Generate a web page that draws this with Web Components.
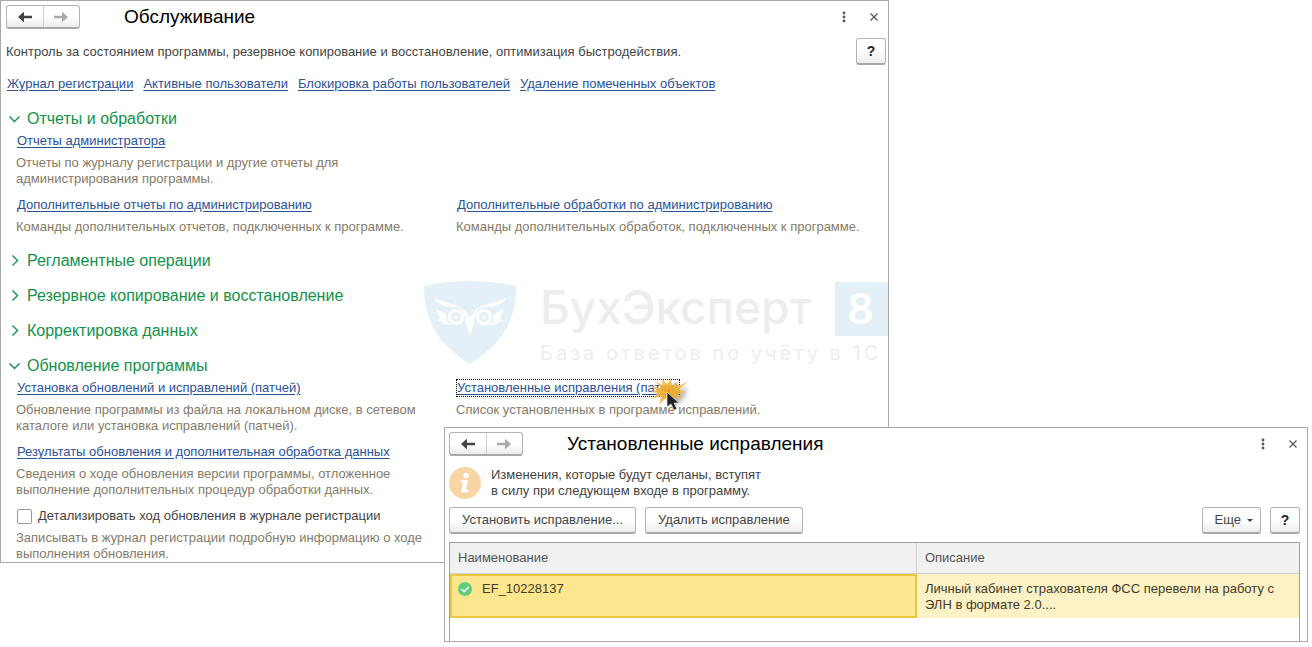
<!DOCTYPE html>
<html lang="ru">
<head>
<meta charset="utf-8">
<title>Обслуживание</title>
<style>
body { margin: 0; background: #fff; font: 13px/16px "Liberation Sans", Arial, sans-serif; color: #444; }
</style>
</head>
<body>
<app-desktop></app-desktop>
<script>
const define = (name, html, setup) => {
  const tpl = document.createElement('template');
  tpl.innerHTML = '<style>*{box-sizing:border-box}</style>' + html;
  customElements.define(name, class extends HTMLElement {
    constructor() {
      super();
      this.attachShadow({ mode: 'open' }).append(tpl.content.cloneNode(true));
    }
    connectedCallback() { if (setup) setup(this, this.shadowRoot); }
  });
};

define('ui-button', `
<style>
:host { display: block; }
button { display: flex; align-items: center; justify-content: center; gap: 6px; height: 27px; padding: 0 12px; width: 100%;
  border: 1px solid #b4b4b4; border-bottom: 2px solid #a8a8a8; border-radius: 3px;
  background: linear-gradient(#fff 50%, #ececec); font: inherit; color: #444; white-space: nowrap; }
:host([help]) { width: 30px; }
:host([help]) button { padding: 0; font-size: 14px; font-weight: bold; color: #222; }
:host([menu]) button { padding: 0 7px 0 12px; }
i { display: none; border: 3px solid transparent; border-top-color: #444; border-bottom: 0; }
:host([menu]) i { display: block; }
</style>
<button type="button"><slot></slot><i></i></button>`);

define('nav-buttons', `
<style>
:host { display: flex; width: 74px; height: 24px; border: 1px solid #b4b4b4; border-bottom: 2px solid #a8a8a8; border-radius: 3px;
  background: linear-gradient(#fff 50%, #ececec); box-sizing: border-box; }
button { flex: 1; display: grid; place-items: center; padding: 0; border: 0; background: none; color: #444; }
button + button { border-left: 1px solid #d0d0d0; color: #aaa; }
</style>
<button type="button" aria-label="Назад"><svg width="14" height="10" viewBox="0 0 14 10"><path d="M6 0v3.800h8v2.400H6V10L5 9.500 0 5 5 .5z" fill="currentColor"/></svg></button>
<button type="button" aria-label="Вперед"><svg width="14" height="10" viewBox="0 0 14 10"><path d="M8 0v3.800H0v2.400h8V10l1-.5L14 5 9 .5z" fill="currentColor"/></svg></button>`);

define('app-window', `
<style>
:host { display: flex; flex-direction: column; position: relative; overflow: hidden; background: #fff; border: 1px solid #a9a9a9; box-sizing: border-box; }
header { display: flex; align-items: center; height: 32px; padding: 0 5px 0 4px; }
:host([main]) header { padding-left: 5px; }
h1 { flex: 1; margin: 0 0 0 44px; font: 19px/24px "Liberation Sans", Arial, sans-serif; color: #000; }
header > button { width: 18px; height: 20px; display: grid; place-items: center; padding: 0; border: 0; background: none; color: #555; }
header > button + button { margin-left: 12px; }
</style>
<slot name="backdrop"></slot>
<header>
  <nav-buttons></nav-buttons><h1></h1>
  <button type="button" aria-label="Меню"><svg width="4" height="12" viewBox="0 0 4 12" fill="currentColor"><circle cx="2" cy="2" r="1.400"/><circle cx="2" cy="6" r="1.400"/><circle cx="2" cy="10" r="1.400"/></svg></button>
  <button type="button" aria-label="Закрыть"><svg width="8" height="8" viewBox="0 0 8 8"><path d="M.5.5l7 7M7.500.5l-7 7" stroke="currentColor" stroke-width="1.200"/></svg></button>
</header>
<slot></slot>`, (el, root) => { root.querySelector('h1').textContent = el.getAttribute('caption'); });

define('ui-link', `
<style>
:host { display: inline-block; }
a { color: #2a5298; text-decoration: underline; text-underline-offset: 2px; }
:host([focused]) a { display: block; outline: 1px dotted #000; }
</style>
<a href="#"><slot></slot></a>`);

define('ui-command', `
<style>
:host { display: block; }
ui-link { margin-left: 1px; vertical-align: top; }
p { margin: 6px 0 0; color: #847b68; }
</style>
<ui-link><slot></slot></ui-link><p><slot name="note"></slot></p>`,
(el, root) => { if (el.hasAttribute('focused')) root.querySelector('ui-link').setAttribute('focused', ''); });

define('ui-group', `
<style>
:host { display: block; }
button { display: flex; align-items: center; gap: 6px; padding: 0; border: 0; background: none; color: #12924a;
  font: 16px/19px "Liberation Sans", Arial, sans-serif; }
svg { display: block; }
:host([open]) svg { transform: rotate(90deg); }
div { padding: 5px 0 0 8px; }
:host(:not([open])) div { display: none; }
</style>
<button type="button"><svg width="13" height="13" viewBox="0 0 13 13"><path d="M4.500 1.500l5 5-5 5" fill="none" stroke="currentColor" stroke-width="1.400"/></svg><span></span></button>
<div><slot></slot></div>`, (el, root) => {
  root.querySelector('span').textContent = el.getAttribute('caption');
  root.querySelector('button').setAttribute('aria-expanded', el.hasAttribute('open'));
});

define('ui-check', `
<style>
:host { display: block; }
label { display: flex; align-items: center; gap: 6px; }
input { appearance: none; width: 15px; height: 15px; margin: 0 0 0 1px; border: 1px solid #999; border-radius: 2px; background: #fff; }
p { margin: 6px 0 0; color: #847b68; }
</style>
<label><input type="checkbox"><span><slot></slot></span></label><p><slot name="note"></slot></p>`);

define('brand-watermark', `
<style>
:host { position: absolute; left: 423px; top: 280px; display: flex; align-items: flex-start; white-space: nowrap; color: #ededef; }
svg { flex: none; }
.words { margin-left: 24px; }
.name { font: 500 46px/52px Inter, sans-serif; }
.tag { font: 20px/24px Inter, sans-serif; letter-spacing: 3px; margin-top: 8px; }
.eight { position: absolute; left: 411px; top: 1px; width: 60px; height: 54px; padding-left: 12px; background: #e4f0f8; color: #fff; font: 600 42px/54px Inter, sans-serif; }
</style>
<svg width="92" height="84" viewBox="0 0 92 84"><path d="M0 5Q46-5 92 5C92 43 76 64 46 83C16 64 0 43 0 5Z" fill="#e4f0f8"/>
<g fill="none" stroke="#fff"><circle cx="32" cy="36" r="6.500" stroke-width="3"/><circle cx="60" cy="36" r="6.500" stroke-width="3"/></g>
<g fill="#fff"><circle cx="32" cy="36" r="2"/><circle cx="60" cy="36" r="2"/><path d="M10 16C20 24 37 21 43 33L46 36L49 33C55 21 72 24 82 16C79 25 68 26 60 26C53 27 51 32 50 42L46 54L42 42C41 32 39 27 32 26C24 26 13 25 10 16Z"/><path d="M12 28l10 5 1 8 5 3-10-1 1-2-6-1 3-3zM80 28l-10 5-1 8-5 3 10-1-1-2 6-1-3-3z"/></g></svg>
<div class="words"><div class="name">БухЭксперт</div><div class="tag">База ответов по учёту в 1С</div></div>
<div class="eight">8</div>`);

define('click-pointer', `
<style>:host { position: absolute; right: -10px; top: -5px; pointer-events: none; } svg { display: block; overflow: visible; }</style>
<svg width="40" height="36" viewBox="0 0 40 36">
<defs><radialGradient id="g"><stop offset="0" stop-color="#f0a218"/><stop offset=".6" stop-color="#f3b43c"/><stop offset="1" stop-color="#f4cf83"/></radialGradient><filter id="s" x="-50%" y="-50%" width="200%" height="200%"><feGaussianBlur stdDeviation="2"/></filter></defs>
<path d="M14 17l12 0 12-5-2 10-10 10-5-4z" fill="#777" opacity=".5" filter="url(#s)"/>
<path d="M0 11l12 2L6 6l8 4-2-7 6 6 4-6 1 7 6-3-2 5 13-6-10 9 7 2-8 2 5 6-8-3-2 4-5-5-9 9 2-9-9 3 6-6-7-1 6-2z" fill="url(#g)" opacity=".9"/>
<path d="M18 17v15l4-3 3 6 3-1-3-6h5z" fill="#222" stroke="#fff" stroke-width=".6"/></svg>`);

define('maintenance-panel', `
<style>
:host { display: block; position: relative; padding: 5px 2px 0 5px; }
.intro { display: flex; justify-content: space-between; align-items: flex-start; }
.intro p { margin: 6px 0 0; color: #444; }
nav { display: flex; flex-wrap: wrap; gap: 10px; margin: 11px 0 0 1px; }
.groups { display: flex; flex-direction: column; gap: 16px; margin: 17px 0 0 2px; }
.grid { display: grid; grid-template-columns: 1fr 1fr; gap: 10px; }
.new-row { grid-column: 1; }
.hit { position: relative; }
</style>
<div class="intro"><p>Контроль за состоянием программы, резервное копирование и восстановление, оптимизация быстродействия.</p><ui-button help>?</ui-button></div>
<nav><ui-link>Журнал регистрации</ui-link><ui-link>Активные пользователи</ui-link><ui-link>Блокировка работы пользователей</ui-link><ui-link>Удаление помеченных объектов</ui-link></nav>
<div class="groups">
<ui-group open caption="Отчеты и обработки"><div class="grid">
<ui-command>Отчеты администратора<span slot="note">Отчеты по журналу регистрации и другие отчеты для<br>администрирования программы.</span></ui-command>
<ui-command class="new-row">Дополнительные отчеты по администрированию<span slot="note">Команды дополнительных отчетов, подключенных к программе.</span></ui-command>
<ui-command>Дополнительные обработки по администрированию<span slot="note">Команды дополнительных обработок, подключенных к программе.</span></ui-command>
</div></ui-group>
<ui-group caption="Регламентные операции"></ui-group>
<ui-group caption="Резервное копирование и восстановление"></ui-group>
<ui-group caption="Корректировка данных"></ui-group>
<ui-group open caption="Обновление программы"><div class="grid">
<ui-command>Установка обновлений и исправлений (патчей)<span slot="note">Обновление программы из файла на локальном диске, в сетевом<br>каталоге или установка исправлений (патчей).</span></ui-command>
<ui-command focused><span class="hit">Установленные исправления (патчи)<click-pointer></click-pointer></span><span slot="note">Список установленных в программе исправлений.</span></ui-command>
<ui-command class="new-row">Результаты обновления и дополнительная обработка данных<span slot="note">Сведения о ходе обновления версии программы, отложенное<br>выполнение дополнительных процедур обработки данных.</span></ui-command>
<ui-check class="new-row">Детализировать ход обновления в журнале регистрации<span slot="note">Записывать в журнал регистрации подробную информацию о ходе<br>выполнения обновления.</span></ui-check>
</div></ui-group>
</div>`);

define('patches-table', `
<style>
:host { display: block; border: 1px solid #a0a0a0; border-bottom: 0; min-height: 99px; }
table { width: 100%; border-collapse: separate; border-spacing: 0; table-layout: fixed; }
th { height: 31px; padding: 0 8px; background: #f1f1f1; border-bottom: 1px solid #cfcfcf; text-align: left; font-weight: normal; color: #555; }
th:first-child { width: 55%; border-right: 1px solid #cfcfcf; }
td { height: 44px; padding: 6px 8px 4px; vertical-align: top; color: #443c26; background: #fdf1c6; border: solid #fdf1c6; border-width: 1px 0; }
td:first-child { padding: 5px 6px; background: #fee68f; border: 2px solid #e8c840; }
.name { display: flex; align-items: center; gap: 10px; }
</style>
<table><thead><tr><th>Наименование</th><th>Описание</th></tr></thead><tbody><tr>
<td><div class="name"><svg width="14" height="14" viewBox="0 0 14 14"><circle cx="7" cy="7" r="7" fill="#5fce7d"/><path d="M3.500 7l2.700 2.700 4.500-5" fill="none" stroke="#fff" stroke-width="1.500"/></svg>EF_10228137</div></td>
<td>Личный кабинет страхователя ФСС перевели на работу с<br>ЭЛН в формате 2.0....</td></tr></tbody></table>`);

define('patches-panel', `
<style>
:host { display: block; padding: 7px 7px 0 4px; }
.info { display: flex; gap: 10px; }
.info p { margin: 0; }
.bar { display: flex; gap: 9px; margin: 8px 0; }
.space { flex: 1; }
svg { flex: none; }
</style>
<div class="info"><svg width="32" height="32" viewBox="0 0 32 32"><circle cx="16" cy="16" r="16" fill="#f8d5a3"/><circle cx="17" cy="8.500" r="2.700" fill="#fff"/><path d="M12 13h7l-2 10h3l-1 2.500h-7l2-10h-3z" fill="#fff"/></svg>
<p>Изменения, которые будут сделаны, вступят<br>в силу при следующем входе в программу.</p></div>
<div class="bar"><ui-button>Установить исправление...</ui-button><ui-button>Удалить исправление</ui-button><span class="space"></span><ui-button menu>Еще</ui-button><ui-button help>?</ui-button></div>
<patches-table></patches-table>`);

define('app-desktop', `
<style>
:host { display: grid; grid-template-columns: 444fr 445fr 419fr; padding-right: 4px; align-items: start; }
.main { grid-area: 1 / 1 / 2 / 3; }
.top { grid-area: 1 / 2 / 2 / 4; margin-top: 427px; z-index: 1; }
</style>
<app-window class="main" main caption="Обслуживание"><brand-watermark slot="backdrop"></brand-watermark><maintenance-panel></maintenance-panel></app-window>
<app-window class="top" caption="Установленные исправления"><patches-panel></patches-panel></app-window>`);
</script>
</body>
</html>
